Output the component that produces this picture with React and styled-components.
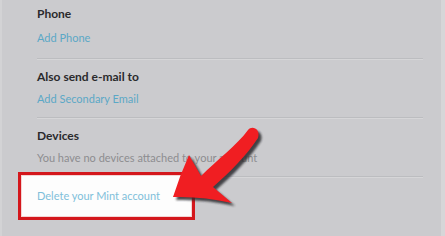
import React from "react";
import styled, { createGlobalStyle } from "styled-components";

const GlobalStyle = createGlobalStyle`
  html, body {
    margin: 0;
    padding: 0;
    background: #cbcbce;
  }
  body {
    font-family: Lato, "Noto Sans", sans-serif;
  }
`;

const Page = styled.div`
  position: relative;
  width: 445px;
  height: 236px;
  box-sizing: border-box;
  overflow: hidden;
  background: #cbcbce;
  border-left: 2px solid #d3d3d5;
  border-right: 4px solid #d6d6d8;
`;

const List = styled.div`
  display: flex;
  flex-direction: column;
  width: 386px;
  padding-left: 35px;
`;

const Section = styled.div`
  display: flex;
  flex-direction: column;
  gap: ${(p) => (p.$first ? "8px" : "6px")};
  padding-top: ${(p) => (p.$first ? "6px" : "10px")};
  padding-bottom: ${(p) => (p.$first ? "12px" : "10px")};
  border-bottom: 1px solid #bcbdc0;
  box-shadow: 0 1px 0 #d6d6d8;
`;

const Title = styled.div`
  font-size: 12px;
  line-height: 16px;
  font-weight: 700;
  color: #2a2a2c;
`;

const LinkText = styled.div`
  font-size: 11px;
  line-height: 16px;
  color: ${(p) => p.$color || "#5ba8c6"};
`;

const Note = styled.div`
  font-size: 11px;
  line-height: 16px;
  color: #8d8d90;
`;

const Highlight = styled.div`
  display: flex;
  align-items: center;
  box-sizing: border-box;
  width: 177px;
  height: 48px;
  margin-top: -5px;
  margin-left: -19px;
  padding-left: 16px;
  background: #fdfdfd;
  border: 3px solid #d4171c;
  box-shadow: inset 0 0 0 1px #f4d4d4;
`;

const Overlay = styled.svg`
  position: absolute;
  left: 0;
  top: 0;
  width: 445px;
  height: 236px;
  pointer-events: none;
`;

const arrowPath =
  "M171 197 Q178 175 187 155 L199 176 C215 160 235 145 246 130 C250 125 259 129 256 138 C245 155 228 172 211 187 L230 203 Q200 196 171 197 Z";

function Arrow() {
  return (
    <Overlay viewBox="0 0 445 236">
      <defs>
        <filter id="soft" x="-20%" y="-20%" width="140%" height="140%">
          <feGaussianBlur stdDeviation="1.2" />
        </filter>
      </defs>
      <path d={arrowPath} transform="translate(3 3)" fill="#2b2b2d" opacity="0.85" filter="url(#soft)" />
      <path d={arrowPath} fill="#f01e22" />
    </Overlay>
  );
}

export default function App() {
  return (
    <>
      <GlobalStyle />
      <Page>
        <List>
          <Section $first>
            <Title>Phone</Title>
            <LinkText>Add Phone</LinkText>
          </Section>
          <Section>
            <Title>Also send e-mail to</Title>
            <LinkText>Add Secondary Email</LinkText>
          </Section>
          <Section>
            <Title>Devices</Title>
            <Note>You have no devices attached to your account</Note>
          </Section>
          <Highlight>
            <LinkText $color="#7fc0da">Delete your Mint account</LinkText>
          </Highlight>
        </List>
        <Arrow />
      </Page>
    </>
  );
}
